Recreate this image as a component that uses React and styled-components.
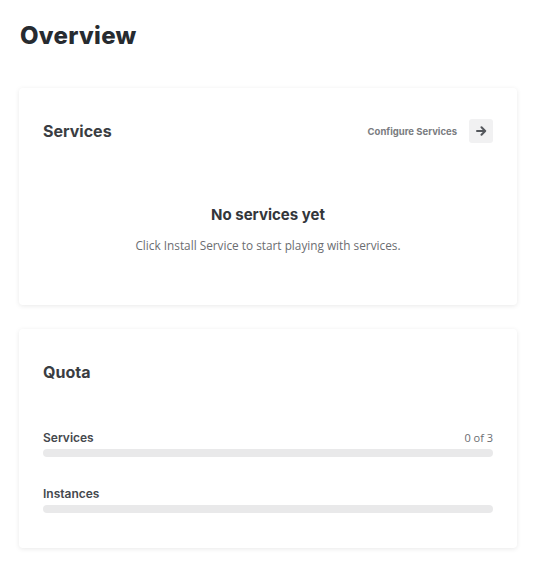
import styled, { createGlobalStyle } from "styled-components";

const GlobalStyle = createGlobalStyle`
  body {
    margin: 0;
    background: #ffffff;
    font-family: "Inter", "Liberation Sans", sans-serif;
  }
`;

const Page = styled.div`
  padding: 20px 17px 20px 19px;
`;

const PageTitle = styled.h1`
  margin: 0 0 36px 1px;
  font-family: "Inter", sans-serif;
  font-weight: 800;
  font-size: 24px;
  line-height: 32px;
  color: #272b30;
  letter-spacing: 0.3px;
`;

const Card = styled.section`
  background: #fff;
  border-radius: 4px;
  box-shadow: 0 1px 5px rgba(0, 0, 0, 0.09);
  padding: 31px 24px 35px;
  margin-bottom: 24px;
`;

const CardHeader = styled.div`
  display: flex;
  align-items: center;
  justify-content: space-between;
  height: 24px;
`;

const CardTitle = styled.h2`
  margin: 0;
  font-family: "Inter", sans-serif;
  font-weight: 700;
  font-size: 16px;
  line-height: 24px;
  color: #3a3d42;
`;

const HeaderAction = styled.div`
  display: flex;
  align-items: center;
  gap: 12px;
`;

const ActionLabel = styled.span`
  font-family: "Inter", sans-serif;
  font-weight: 700;
  font-size: 9.5px;
  color: #7a7c80;
`;

const IconButton = styled.button`
  width: 24px;
  height: 24px;
  border: none;
  border-radius: 3px;
  background: #f1f1f2;
  display: flex;
  align-items: center;
  justify-content: center;
  padding: 0;
`;

const Empty = styled.div`
  padding: 62px 0 16px;
  text-align: center;
`;

const EmptyTitle = styled.div`
  font-family: "Inter", sans-serif;
  font-weight: 700;
  font-size: 15px;
  line-height: 20px;
  color: #33363b;
  margin-bottom: 11px;
`;

const EmptyText = styled.div`
  font-family: "Open Sans", sans-serif;
  font-size: 11.8px;
  line-height: 18px;
  color: #6b6d71;
`;

const QuotaList = styled.div`
  margin-top: 45px;
  display: flex;
  flex-direction: column;
  gap: 28px;
`;

const QuotaRow = styled.div`
  display: flex;
  flex-direction: column;
  gap: 4px;
`;

const QuotaHead = styled.div`
  display: flex;
  justify-content: space-between;
  align-items: center;
  height: 16px;
`;

const QuotaLabel = styled.span`
  font-family: "Inter", sans-serif;
  font-weight: 600;
  font-size: 12px;
  color: #45484d;
`;

const QuotaCount = styled.span`
  font-family: "Open Sans", sans-serif;
  font-size: 11px;
  color: #6b6d71;
`;

const Bar = styled.div`
  height: 8px;
  border-radius: 4px;
  background: #e9e9ea;
  overflow: hidden;
`;

const BarFill = styled.div`
  height: 100%;
  background: #4a7cf0;
`;

function ArrowIcon() {
  return (
    <svg width="11" height="10" viewBox="0 0 11 10" fill="none">
      <path
        d="M1 5h8M5.5 1.3L9.2 5 5.5 8.7"
        stroke="#54575c"
        strokeWidth="2"
        strokeLinecap="round"
        strokeLinejoin="round"
      />
    </svg>
  );
}

function QuotaItem({ label, used, total }) {
  const pct = total ? (used / total) * 100 : 0;
  return (
    <QuotaRow>
      <QuotaHead>
        <QuotaLabel>{label}</QuotaLabel>
        {total ? <QuotaCount>{`${used} of ${total}`}</QuotaCount> : null}
      </QuotaHead>
      <Bar>
        <BarFill style={{ width: `${pct}%` }} />
      </Bar>
    </QuotaRow>
  );
}

export default function App() {
  return (
    <Page>
      <GlobalStyle />
      <PageTitle>Overview</PageTitle>

      <Card>
        <CardHeader>
          <CardTitle>Services</CardTitle>
          <HeaderAction>
            <ActionLabel>Configure Services</ActionLabel>
            <IconButton>
              <ArrowIcon />
            </IconButton>
          </HeaderAction>
        </CardHeader>
        <Empty>
          <EmptyTitle>No services yet</EmptyTitle>
          <EmptyText>Click Install Service to start playing with services.</EmptyText>
        </Empty>
      </Card>

      <Card>
        <CardHeader>
          <CardTitle>Quota</CardTitle>
        </CardHeader>
        <QuotaList>
          <QuotaItem label="Services" used={0} total={3} />
          <QuotaItem label="Instances" used={0} />
        </QuotaList>
      </Card>
    </Page>
  );
}
